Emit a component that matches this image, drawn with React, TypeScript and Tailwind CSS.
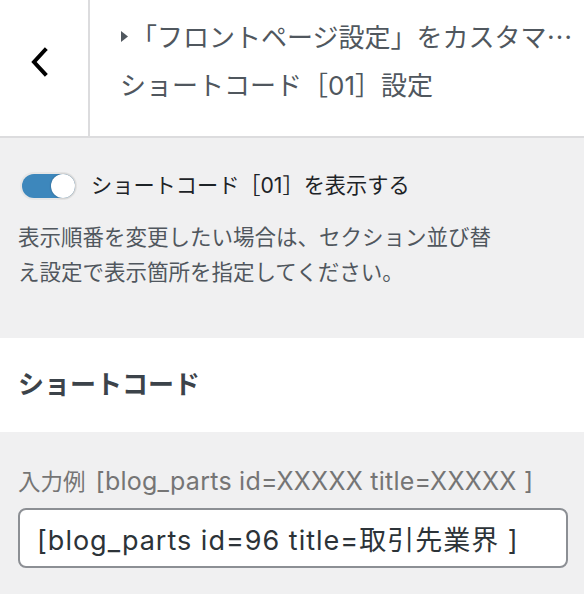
import React, { useState } from 'react';

const font = { fontFamily: 'Inter, "Noto Sans CJK JP", sans-serif' };
const cjkFirst = { fontFamily: '"Noto Sans CJK JP", sans-serif' };

function BackChevron(): JSX.Element {
  return (
    <svg width="20" height="30" viewBox="0 0 20 30" fill="none" stroke="#000" strokeWidth="4" strokeLinecap="square">
      <path d="M16 3L5 15l11 12" />
    </svg>
  );
}

function Toggle({ on, onChange }: { on: boolean; onChange: () => void }): JSX.Element {
  return (
    <button
      type="button"
      onClick={onChange}
      className="relative w-[57px] h-[28px] rounded-full bg-[#e6e6e6] p-[2px] shrink-0"
    >
      <span className={`flex items-center w-full h-full rounded-full ${on ? 'bg-[#3d87bc] justify-end' : 'bg-[#8c8f94] justify-start'}`}>
        <span className="w-[24px] h-[24px] rounded-full bg-white shadow-[0_0_2px_rgba(0,0,0,0.35)]" />
      </span>
    </button>
  );
}

export default function App(): JSX.Element {
  const [visible, setVisible] = useState(true);
  const [code, setCode] = useState('[blog_parts id=96 title=取引先業界 ]');

  return (
    <div className="w-[584px] h-[594px] overflow-hidden bg-[#f0f0f1]" style={font}>
      {/* Header */}
      <div className="flex h-[138px] bg-white border-b-2 border-[#dcdcde]">
        <div className="w-[90px] shrink-0 flex items-center pl-[29px] border-r-2 border-[#dcdcde] pb-[13px]">
          <BackChevron />
        </div>
        <div className="flex-1 min-w-0 pl-[30px] pt-[18px] text-[#50575e]">
          <div className="flex items-center h-[36px] text-[26px] leading-none whitespace-nowrap" style={cjkFirst}>
            <svg width="9" height="13" viewBox="0 0 9 13" className="shrink-0 mr-[2px]">
              <path d="M1 1l7 5.5L1 12z" fill="#50575e" />
            </svg>
            <span>「フロントページ設定」をカスタマ…</span>
          </div>
          <div className="mt-[14px] h-[36px] flex items-center text-[26px] leading-none whitespace-nowrap">
            ショートコード［01］設定
          </div>
        </div>
      </div>

      {/* Toggle section */}
      <div className="px-[20px] pt-[34px] h-[200px]">
        <label className="flex items-center gap-[14px] cursor-pointer">
          <Toggle on={visible} onChange={() => setVisible(!visible)} />
          <span className="text-[21.2px] leading-none text-[#1d2327]">ショートコード［01］を表示する</span>
        </label>
        <p className="mt-[20px] w-[484px] -ml-[2px] text-[21.5px] leading-[35px] text-[#50575e]">
          表示順番を変更したい場合は、セクション並び替え設定で表示箇所を指定してください。
        </p>
      </div>

      {/* Heading */}
      <div className="h-[94px] bg-white flex items-center px-[18px]">
        <h3 className="text-[26px] font-bold text-[#3c434a] leading-none">ショートコード</h3>
      </div>

      {/* Input */}
      <div className="px-[18px] pt-[37px]">
        <div className="flex items-baseline h-[28px] text-[22.5px] leading-none text-[#757575] mb-[11px] whitespace-nowrap">
          <span>入力例</span>
          <span className="ml-[10px] text-[25px] tracking-[0.25px]">[blog_parts id=XXXXX title=XXXXX ]</span>
        </div>
        <input
          value={code}
          onChange={(e) => setCode(e.target.value)}
          className="w-[550px] h-[60px] px-[17px] bg-white border-2 border-[#8c8f94] rounded-[8px] text-[27px] tracking-[1px] text-[#2c3338] outline-none"
        />
      </div>
    </div>
  );
}
